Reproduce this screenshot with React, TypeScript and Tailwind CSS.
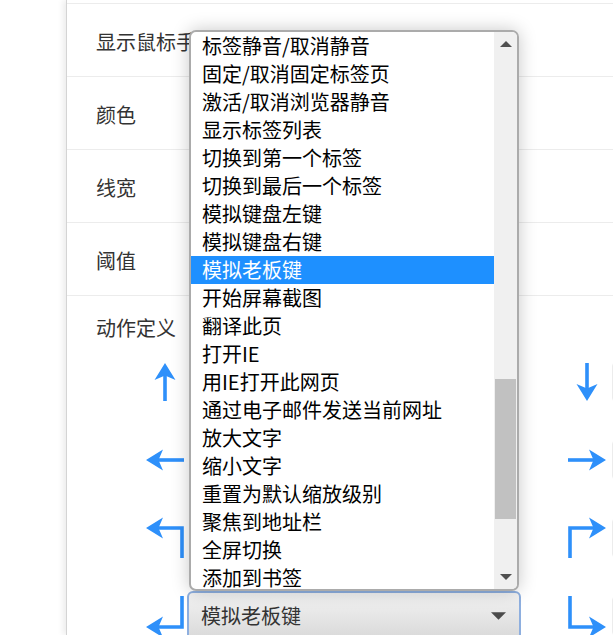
import React from 'react';

const actions = [
  '标签静音/取消静音',
  '固定/取消固定标签页',
  '激活/取消浏览器静音',
  '显示标签列表',
  '切换到第一个标签',
  '切换到最后一个标签',
  '模拟键盘左键',
  '模拟键盘右键',
  '模拟老板键',
  '开始屏幕截图',
  '翻译此页',
  '打开IE',
  '用IE打开此网页',
  '通过电子邮件发送当前网址',
  '放大文字',
  '缩小文字',
  '重置为默认缩放级别',
  '聚焦到地址栏',
  '全屏切换',
  '添加到书签',
];

const selected = '模拟老板键';

type Kind = 'up' | 'down' | 'left' | 'right' | 'upLeft' | 'downLeft' | 'upRight' | 'downRight';

// left-pointing head with a notch, tip at (1, y)
const head = (y: number) => `M1 ${y} L18 ${y - 10.5} L13.5 ${y} L18 ${y + 10.5} Z`;

function Arrow({ kind }: { kind: Kind }) {
  let body: React.ReactNode;
  let transform = '';
  if (kind === 'up' || kind === 'down' || kind === 'left' || kind === 'right') {
    body = (
      <>
        <path d={head(20)} />
        <rect x="11" y="18.2" width="28" height="3.6" />
      </>
    );
    if (kind === 'up') transform = 'rotate(90 20 20)';
    if (kind === 'right') transform = 'rotate(180 20 20)';
    if (kind === 'down') transform = 'rotate(270 20 20)';
  } else if (kind === 'upLeft' || kind === 'upRight') {
    body = (
      <>
        <path d={head(10)} />
        <path d="M11 10 H37 V40" fill="none" stroke="currentColor" strokeWidth="3.6" />
      </>
    );
    if (kind === 'upRight') transform = 'translate(40 0) scale(-1 1)';
  } else {
    body = (
      <>
        <path d={head(31)} />
        <path d="M37 0 V31 H11" fill="none" stroke="currentColor" strokeWidth="3.6" />
      </>
    );
    if (kind === 'downRight') transform = 'translate(40 0) scale(-1 1)';
  }
  return (
    <svg width="40" height="40" viewBox="0 0 40 40" className="shrink-0 overflow-visible text-[#2e90fa]" fill="currentColor">
      <g transform={transform}>{body}</g>
    </svg>
  );
}

function Caret({ down, className }: { down?: boolean; className?: string }) {
  return (
    <svg width="14" height="7" viewBox="0 0 14 7" className={className}>
      <path d={down ? 'M0 0 H14 L7 7 Z' : 'M0 7 H14 L7 0 Z'} fill="currentColor" />
    </svg>
  );
}

const rows: { left: Kind; right: Kind }[] = [
  { left: 'up', right: 'down' },
  { left: 'left', right: 'right' },
  { left: 'upLeft', right: 'upRight' },
  { left: 'downLeft', right: 'downRight' },
];

export default function App() {
  return (
    <div className="relative flex w-[613px] h-[635px] overflow-hidden bg-white font-['Noto_Sans_CJK_SC','Microsoft_YaHei',sans-serif] text-[#333]">
      <div className="w-[66px] shrink-0" />
      <div className="flex-1 border-l border-[#d4d4d4] shadow-[-3px_0_6px_rgba(0,0,0,0.08)]">
        <div className="h-[4px] border-b border-[#ececec]" />
        {['显示鼠标手势', '颜色', '线宽', '阈值'].map((label) => (
          <div key={label} className="flex items-center h-[73px] pl-[29px] pt-[3px] border-b border-[#ececec] text-[20px]">
            {label}
          </div>
        ))}
        <div>
          <div className="pl-[29px] pt-[18px] leading-[28px] text-[20px]">动作定义</div>
          <div className="mt-[1px]">
            {rows.map((r, i) => (
              <div key={i} className="flex items-center h-[78px] pl-[78px]">
                <Arrow kind={r.left} />
                {i === 3 ? (
                  <div className="ml-[2px] flex items-center justify-between w-[334px] h-[50px] shrink-0 rounded-[6px] border-2 border-[#8eafdf] bg-gradient-to-b from-[#f3f3f3] to-[#d9d9d9] pl-[12px] pr-[13px] text-[20px] text-[#333]">
                    <span>{selected}</span>
                    <Caret down className="text-[#4a4a4a] w-[15px] h-[8px]" />
                  </div>
                ) : (
                  <div className="ml-[4px] mr-[4px] w-[328px] h-[40px] shrink-0 rounded-[4px] border border-[#e2e2e2] bg-white" />
                )}
                <div className="ml-[46px]">
                  <Arrow kind={r.right} />
                </div>
                <div className="ml-[5px] w-[200px] h-[40px] shrink-0 rounded-[4px] border border-[#ececec]" />
              </div>
            ))}
          </div>
        </div>
      </div>

      {/* open dropdown list */}
      <div className="absolute left-[189px] top-[30px] w-[330px] h-[561px] flex rounded-[7px] border-2 border-[#ababab] bg-white overflow-hidden shadow-[0_0_18px_rgba(0,0,0,0.22)]">
        <ul className="flex-1 overflow-hidden">
          {actions.map((a) => (
            <li
              key={a}
              className={
                a === selected
                  ? 'h-[28px] pl-[11px] leading-[28px] text-[20px] whitespace-nowrap bg-[#1e90ff] text-white'
                  : 'h-[28px] pl-[11px] leading-[28px] text-[20px] whitespace-nowrap text-black'
              }
            >
              {a}
            </li>
          ))}
        </ul>
        <div className="w-[23px] flex flex-col bg-[#f0f0f0]">
          <div className="h-[28px] flex items-center justify-center pb-[4px]">
            <Caret className="text-[#505050] w-[12px] h-[6px]" />
          </div>
          <div className="flex-1">
            <div className="mt-[319px] h-[140px] mx-[1px] bg-[#c1c1c1]" />
          </div>
          <div className="h-[28px] flex items-center justify-center pt-[4px]">
            <Caret down className="text-[#505050] w-[12px] h-[6px]" />
          </div>
        </div>
      </div>
    </div>
  );
}
